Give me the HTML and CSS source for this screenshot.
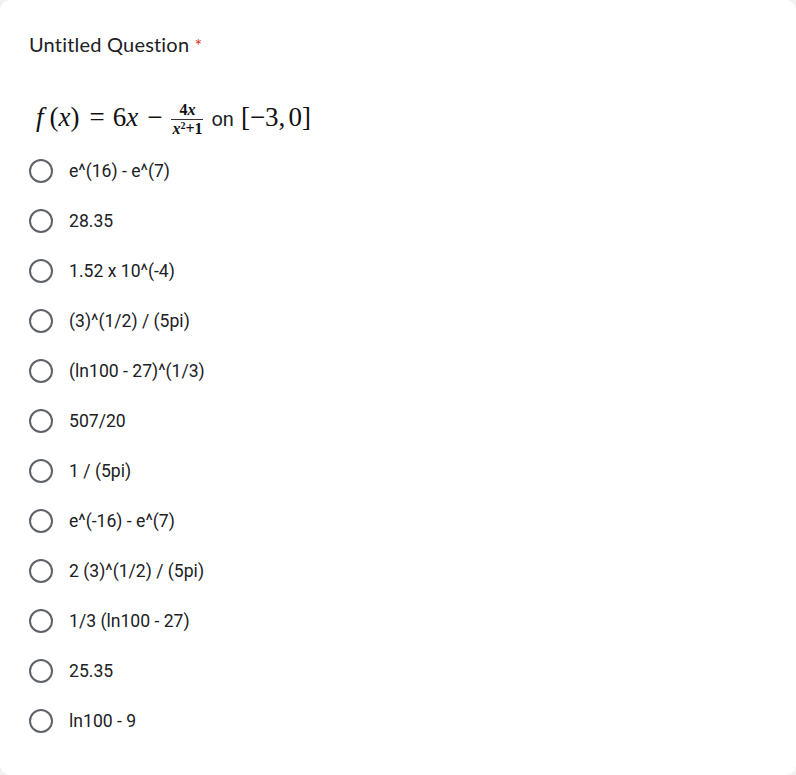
FILE: index.html
```html
<!DOCTYPE html>
<html>
<head>
<meta charset="utf-8">
<link rel="stylesheet" href="styles.css">
</head>
<body>
<div class="card">
  <div class="title">Untitled Question <span class="req">*</span></div>
  <div class="formula"><span class="m"><i>f</i><span class="s7"></span>(<i>x</i>)<span class="s10"></span>=<span class="s8"></span>6<i>x</i><span class="s9"></span>−<span class="s8"></span></span><span class="frac"><span class="num">4<i>x</i></span><span class="den"><i>x</i><span class="sq">2</span>+1</span></span><span class="on">on</span><span class="m">[−3,<span class="s4"></span>0]</span></div>
  <div class="options">
    <div class="opt"><span class="radio"></span><span class="lbl">e^(16) - e^(7)</span></div>
    <div class="opt"><span class="radio"></span><span class="lbl">28.35</span></div>
    <div class="opt"><span class="radio"></span><span class="lbl">1.52 x 10^(-4)</span></div>
    <div class="opt"><span class="radio"></span><span class="lbl">(3)^(1/2) / (5pi)</span></div>
    <div class="opt"><span class="radio"></span><span class="lbl">(ln100 - 27)^(1/3)</span></div>
    <div class="opt"><span class="radio"></span><span class="lbl">507/20</span></div>
    <div class="opt"><span class="radio"></span><span class="lbl">1 / (5pi)</span></div>
    <div class="opt"><span class="radio"></span><span class="lbl">e^(-16) - e^(7)</span></div>
    <div class="opt"><span class="radio"></span><span class="lbl">2 (3)^(1/2) / (5pi)</span></div>
    <div class="opt"><span class="radio"></span><span class="lbl">1/3 (ln100 - 27)</span></div>
    <div class="opt"><span class="radio"></span><span class="lbl">25.35</span></div>
    <div class="opt"><span class="radio"></span><span class="lbl">ln100 - 9</span></div>
  </div>
</div>
</body>
</html>
```
FILE: styles.css
```css
html, body {
  margin: 0;
  padding: 0;
  background: #f1f1f1;
}
.card {
  box-sizing: border-box;
  width: 796px;
  height: 775px;
  background: #ffffff;
  border-radius: 10px;
  padding: 32px 29px 0 29px;
}
.title {
  font-family: Lato, "Open Sans", sans-serif;
  font-size: 20px;
  letter-spacing: 0.2px;
  color: #202124;
  line-height: 24px;
}
.req {
  color: #d93025;
  font-size: 18px;
}
.formula {
  margin-top: 40px;
  margin-left: 7px;
  height: 40px;
  line-height: 40px;
  color: #111111;
  white-space: nowrap;
}
.m {
  font-family: "Liberation Serif", "DejaVu Serif", serif;
  font-size: 27px;
}
.m i {
  font-style: italic;
}
.s4, .s7, .s8, .s9, .s10 {
  display: inline-block;
}
.s4 { width: 3px; }
.s7 { width: 6px; }
.s8 { width: 8px; }
.s9 { width: 9px; }
.s10 { width: 10px; }
.frac {
  display: inline-flex;
  flex-direction: column;
  align-items: center;
  font-family: "Liberation Serif", serif;
  font-size: 16px;
  font-weight: bold;
  line-height: 14px;
  vertical-align: 11px;
  margin: 0 8px 0 1px;
}
.frac i {
  font-style: italic;
}
.num {
  border-bottom: 1px solid #333333;
  padding: 0 8px 2px;
}
.den {
  padding-top: 2px;
}
.sq {
  font-size: 10px;
  position: relative;
  top: -5px;
}
.on {
  font-family: Roboto, sans-serif;
  font-size: 20px;
  margin-right: 7px;
  color: #202124;
}
.options {
  margin-top: 22px;
  display: flex;
  flex-direction: column;
  gap: 26px;
}
.opt {
  display: flex;
  align-items: center;
  height: 24px;
}
.radio {
  box-sizing: border-box;
  width: 24px;
  height: 24px;
  border: 2px solid #5f6368;
  border-radius: 50%;
  flex: none;
}
.lbl {
  margin-left: 16px;
  font-family: Roboto, sans-serif;
  font-size: 17.6px;
  color: #202124;
}
```
